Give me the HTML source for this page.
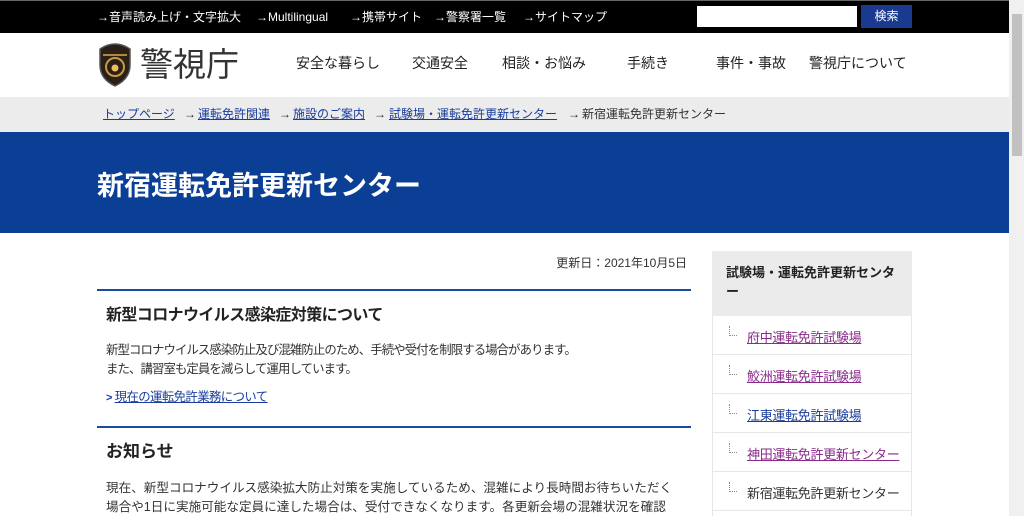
<!DOCTYPE html>
<html><head><meta charset="utf-8"><style>
*{margin:0;padding:0;box-sizing:border-box}
html,body{width:1024px;height:516px;overflow:hidden}
body{position:relative;background:#fff;font-family:"Liberation Sans","Noto Sans CJK JP",sans-serif;color:#222}
.a{position:absolute;white-space:nowrap}
#top{position:absolute;left:0;top:0;width:1009px;height:33px;background:#000;border-top:1px solid #666}
#top span{position:absolute;top:8px;color:#fff;font-size:12px;line-height:16px;white-space:nowrap}
#hdr{position:absolute;left:0;top:33px;width:1009px;height:64px;background:#fff}
.nav{position:absolute;top:20px;font-size:14px;line-height:20px;color:#222;white-space:nowrap}
#bc{position:absolute;left:0;top:97px;width:1009px;height:35px;background:#ececec;font-size:12px}
#bc span{position:absolute;top:9px;line-height:16px;white-space:nowrap}
#bc u{color:#1a3d9c}
#band{position:absolute;left:0;top:132px;width:1009px;height:101px;background:#0b3f95}
#sb{position:absolute;left:1009px;top:0;width:15px;height:516px;background:#f0f0f0}
.line{position:absolute;left:97px;width:594px;height:2px;background:#1c4a9c}
p.t{position:absolute;left:106px;font-size:12px;letter-spacing:-0.9px;color:#333;line-height:19px}
.side{position:absolute;left:712px;width:200px;border:1px solid #e6e6e6;border-top:none;height:39px}
.side span{position:absolute;left:34px;top:11px;font-size:13px;letter-spacing:-0.3px;text-decoration:underline;white-space:nowrap}
.side i{position:absolute;left:16px;top:10px;width:8px;height:10px;border-left:1px dotted #888;border-bottom:1px dotted #888}
</style></head><body>
<div id="top">
<span style="left:97px">→音声読み上げ・文字拡大</span>
<span style="left:256px">→Multilingual</span>
<span style="left:350px">→携帯サイト</span>
<span style="left:434px">→警察署一覧</span>
<span style="left:523px">→サイトマップ</span>
<div class="a" style="left:697px;top:5px;width:160px;height:21px;background:#fff"></div>
<div class="a" style="left:861px;top:4px;width:51px;height:23px;background:#1a3a8f;color:#fff;font-size:12px;text-align:center;line-height:23px">検索</div>
</div>
<div id="hdr">
<svg class="a" style="left:97px;top:8px" width="36" height="46" viewBox="0 0 36 46"><path d="M3 8 Q18 -2 33 8 L33 24 Q33 38 18 45 Q3 38 3 24Z" fill="#2a2018" stroke="#555" stroke-width="1.5"/><path d="M6 14 H30" stroke="#b08840" stroke-width="2"/><circle cx="18" cy="26" r="9" fill="none" stroke="#c89a40" stroke-width="2"/><circle cx="18" cy="27" r="3.5" fill="#e8c060"/></svg>
<div class="a" style="left:140px;top:12px;font-size:33px;line-height:40px;color:#333">警視庁</div>
<span class="nav" style="left:296px">安全な暮らし</span>
<span class="nav" style="left:412px">交通安全</span>
<span class="nav" style="left:502px">相談・お悩み</span>
<span class="nav" style="left:627px">手続き</span>
<span class="nav" style="left:716px">事件・事故</span>
<span class="nav" style="left:809px">警視庁について</span>
</div>
<div id="bc">
<span style="left:103px"><u>トップページ</u></span><span style="left:184px">→</span>
<span style="left:198px"><u>運転免許関連</u></span><span style="left:279px">→</span>
<span style="left:293px"><u>施設のご案内</u></span><span style="left:374px">→</span>
<span style="left:389px"><u>試験場・運転免許更新センター</u></span><span style="left:568px">→</span>
<span style="left:582px;color:#333">新宿運転免許更新センター</span>
</div>
<div id="band"><div class="a" style="left:97px;top:32px;color:#fff;font-size:27px;font-weight:bold">新宿運転免許更新センター</div></div>
<div class="a" style="left:541px;top:254px;width:146px;text-align:right;font-size:12px;color:#333">更新日：2021年10月5日</div>
<div class="line" style="top:289px"></div>
<div class="a" style="left:106px;top:301px;font-size:16px;letter-spacing:-0.6px;font-weight:bold">新型コロナウイルス感染症対策について</div>
<p class="t" style="top:341px;font-size:12.4px;letter-spacing:-0.9px">新型コロナウイルス感染防止及び混雑防止のため、手続や受付を制限する場合があります。<br>また、講習室も定員を減らして運用しています。</p>
<div class="a" style="left:106px;top:387px;font-size:12.4px;letter-spacing:-0.6px;color:#1a3d9c"><b style="font-size:11px">&gt;</b> <u>現在の運転免許業務について</u></div>
<div class="line" style="top:426px"></div>
<div class="a" style="left:106px;top:437px;font-size:17px;font-weight:bold">お知らせ</div>
<p class="t" style="top:479px;width:572px;font-size:12.6px;letter-spacing:0">現在、新型コロナウイルス感染拡大防止対策を実施しているため、混雑により長時間お待ちいただく場合や1日に実施可能な定員に達した場合は、受付できなくなります。各更新会場の混雑状況を確認</p>
<div class="a" style="left:712px;top:251px;width:200px;height:65px;background:#ebebeb"></div>
<div class="a" style="left:726px;top:263px;font-size:13px;font-weight:bold;line-height:19px;white-space:normal;width:172px;word-break:break-all">試験場・運転免許更新センター</div>
<div class="side" style="top:316px"><i></i><span style="color:#8a2a8a">府中運転免許試験場</span></div>
<div class="side" style="top:355px"><i></i><span style="color:#8a2a8a">鮫洲運転免許試験場</span></div>
<div class="side" style="top:394px"><i></i><span style="color:#1a3d9c">江東運転免許試験場</span></div>
<div class="side" style="top:433px"><i></i><span style="color:#8a2a8a">神田運転免許更新センター</span></div>
<div class="side" style="top:472px"><i></i><span style="color:#333;text-decoration:none">新宿運転免許更新センター</span></div>
<div class="side" style="top:511px;height:5px;border-bottom:none"></div>
<div id="sb"><div class="a" style="left:3px;top:14px;width:10px;height:142px;background:#c1c1c1"></div></div>
</body></html>
